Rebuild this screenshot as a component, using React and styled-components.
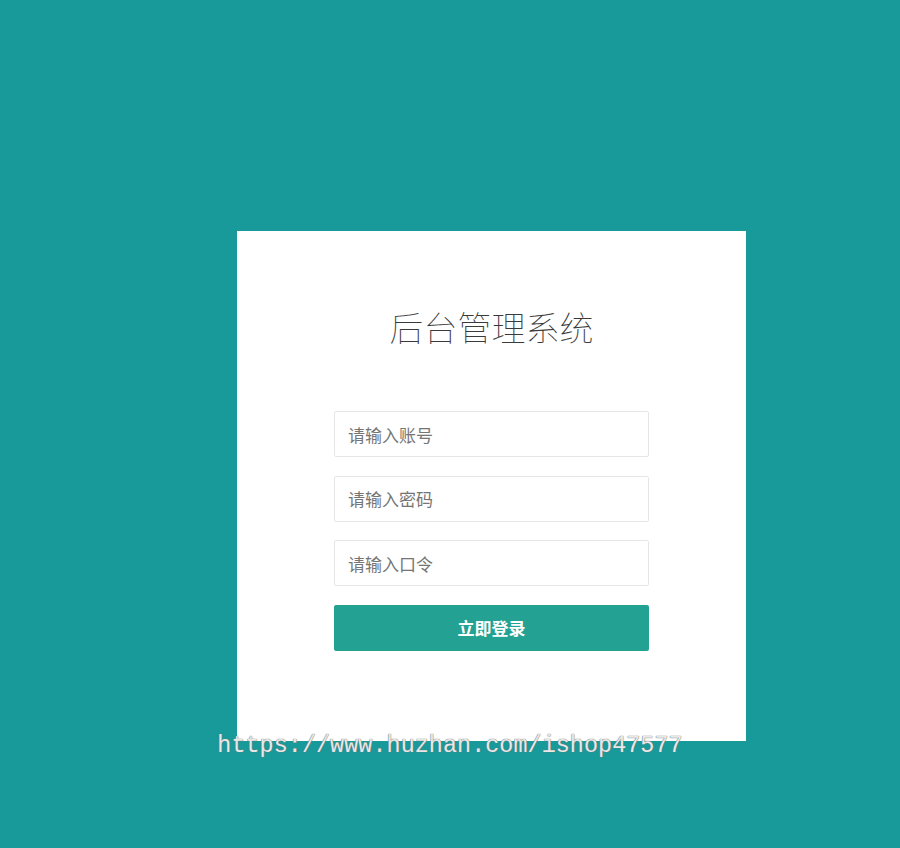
import React from 'react';
import styled, { createGlobalStyle } from 'styled-components';

const Global = createGlobalStyle`
  html, body {
    margin: 0;
    padding: 0;
    background: #189a9a;
  }
  * { box-sizing: border-box; }
`;

const Page = styled.div`
  position: relative;
  min-height: 848px;
  padding: 231px 0 0 237px;
  font-family: "Noto Sans CJK SC", "Noto Sans", sans-serif;
`;

const Card = styled.div`
  width: 509px;
  height: 510px;
  background: #fff;
  padding-top: 72px;
  display: flex;
  flex-direction: column;
  align-items: center;
`;

const Title = styled.h1`
  margin: 0 0 60px;
  height: 48px;
  line-height: 48px;
  font-size: 34px;
  font-weight: 100;
  color: #3a3a3a;
`;

const Form = styled.form`
  width: 315px;
  display: flex;
  flex-direction: column;
  gap: 18.5px;
`;

const Input = styled.input`
  width: 100%;
  height: 46px;
  border: 1px solid #e6e6e6;
  border-radius: 2px;
  padding: 0 13px;
  font-family: inherit;
  font-size: 17px;
  color: #333;
  outline: none;
  &::placeholder { color: #757575; }
`;

const Button = styled.button`
  height: 46px;
  border: none;
  border-radius: 2px;
  background: #23a192;
  color: #fff;
  font-family: inherit;
  font-size: 17px;
  font-weight: 700;
  cursor: pointer;
`;

const Watermark = styled.div`
  position: absolute;
  top: 732px;
  left: 0;
  right: 0;
  text-align: center;
  font-family: "Liberation Mono", monospace;
  font-size: 23.5px;
  color: #e8e8e8;
  text-shadow: 0 0 1px #666, 0 0 1px #888;
  pointer-events: none;
`;

export default function App() {
  return (
    <Page>
      <Global />
      <Card>
        <Title>后台管理系统</Title>
        <Form onSubmit={e => e.preventDefault()}>
          <Input placeholder="请输入账号" />
          <Input type="password" placeholder="请输入密码" />
          <Input placeholder="请输入口令" />
          <Button type="submit">立即登录</Button>
        </Form>
      </Card>
      <Watermark>https://www.huzhan.com/ishop47577</Watermark>
    </Page>
  );
}
